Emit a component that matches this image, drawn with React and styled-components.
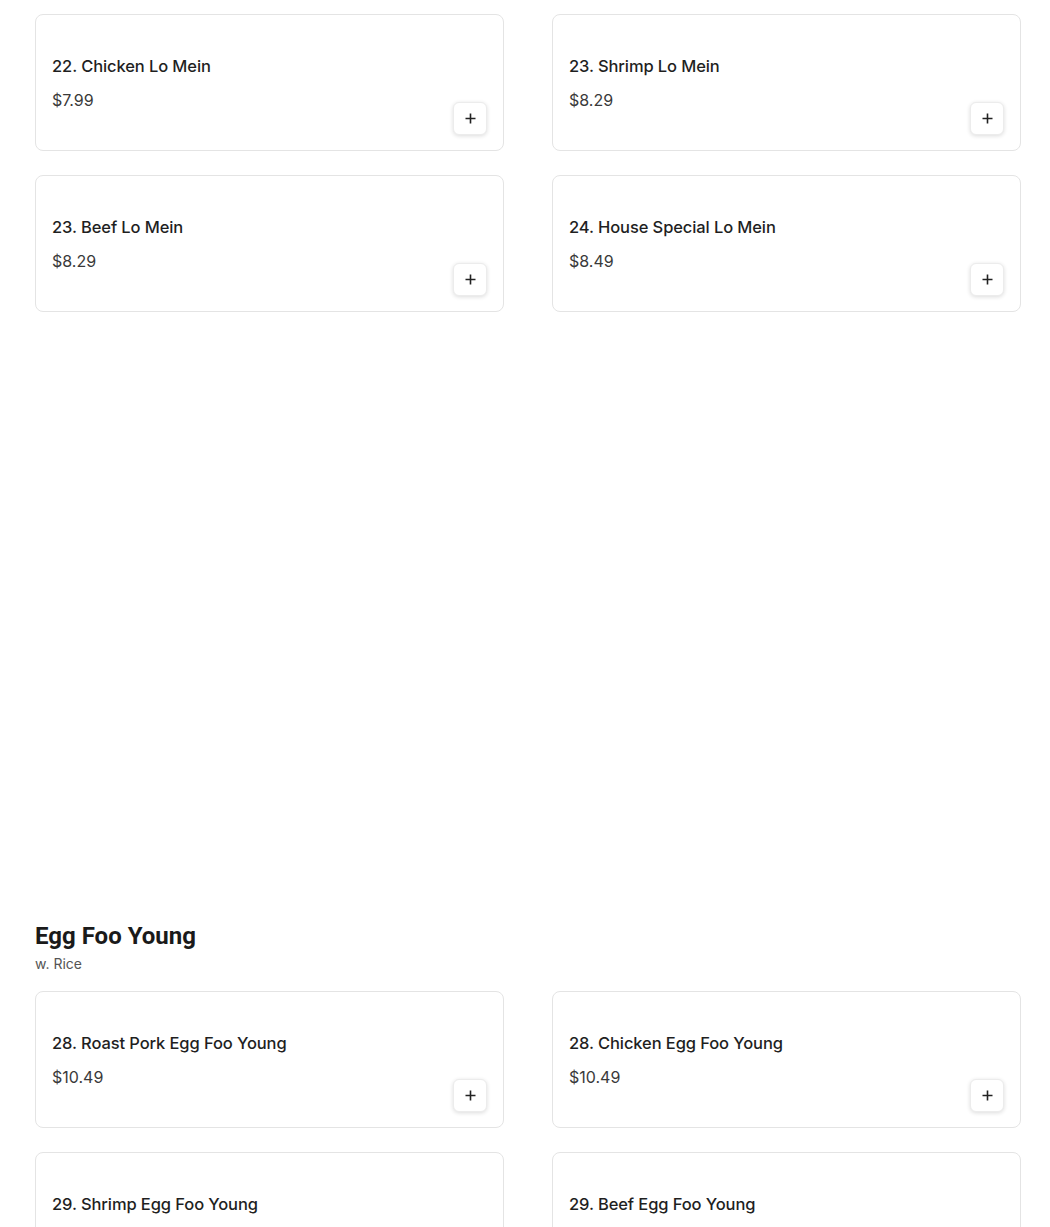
import React from "react";
import styled, { createGlobalStyle } from "styled-components";

const GlobalStyle = createGlobalStyle`
  body {
    margin: 0;
    background: #fff;
    font-family: Inter, "Noto Sans", sans-serif;
    color: #1f1f1f;
  }
`;

const Page = styled.main`
  padding: 14px 29px 40px 35px;
`;

const Section = styled.section`
  margin-top: ${(p) => p.$offset || 0}px;
`;

const SectionTitle = styled.h2`
  margin: 0;
  font-family: Roboto, "Liberation Sans", sans-serif;
  font-size: 24px;
  line-height: 28px;
  font-weight: 700;
  color: #1a1a1a;
`;

const SectionNote = styled.p`
  margin: 4px 0 17px;
  font-size: 14px;
  line-height: 20px;
  color: #555;
`;

const Grid = styled.div`
  display: grid;
  grid-template-columns: 1fr 1fr;
  column-gap: 48px;
  row-gap: 24px;
`;

const Card = styled.div`
  box-sizing: border-box;
  height: 137px;
  display: flex;
  justify-content: space-between;
  padding: 39px 16px 15px;
  border: 1px solid #e4e4e4;
  border-radius: 8px;
  background: #fff;
`;

const Info = styled.div`
  display: flex;
  flex-direction: column;
  gap: 11px;
`;

const Name = styled.div`
  font-size: 16.5px;
  line-height: 24px;
  font-weight: 500;
  color: #1f1f1f;
  letter-spacing: -0.1px;
`;

const Price = styled.div`
  font-size: 16px;
  line-height: 22px;
  color: #3a3a3a;
`;

const AddButton = styled.button`
  align-self: flex-end;
  width: 34px;
  height: 33px;
  display: flex;
  align-items: center;
  justify-content: center;
  padding: 0;
  border: 1px solid #ececec;
  border-radius: 6px;
  background: #fff;
  box-shadow: 0 1px 4px rgba(0, 0, 0, 0.14);
  cursor: pointer;
`;

const PlusIcon = () => (
  <svg width="11" height="11" viewBox="0 0 11 11" fill="none">
    <path d="M5.5 0.5v10M0.5 5.5h10" stroke="#222" strokeWidth="1.6" />
  </svg>
);

const loMein = [
  { name: "22. Chicken Lo Mein", price: "$7.99" },
  { name: "23. Shrimp Lo Mein", price: "$8.29" },
  { name: "23. Beef Lo Mein", price: "$8.29" },
  { name: "24. House Special Lo Mein", price: "$8.49" },
];

const eggFooYoung = [
  { name: "28. Roast Pork Egg Foo Young", price: "$10.49" },
  { name: "28. Chicken Egg Foo Young", price: "$10.49" },
  { name: "29. Shrimp Egg Foo Young", price: "$10.99" },
  { name: "29. Beef Egg Foo Young", price: "$10.99" },
];

function ItemCard({ item }) {
  return (
    <Card>
      <Info>
        <Name>{item.name}</Name>
        <Price>{item.price}</Price>
      </Info>
      <AddButton aria-label={`Add ${item.name}`}>
        <PlusIcon />
      </AddButton>
    </Card>
  );
}

export default function App() {
  return (
    <>
      <GlobalStyle />
      <Page>
        <Section>
          <Grid>
            {loMein.map((item) => (
              <ItemCard key={item.name} item={item} />
            ))}
          </Grid>
        </Section>
        <Section $offset={610}>
          <SectionTitle>Egg Foo Young</SectionTitle>
          <SectionNote>w. Rice</SectionNote>
          <Grid>
            {eggFooYoung.map((item) => (
              <ItemCard key={item.name} item={item} />
            ))}
          </Grid>
        </Section>
      </Page>
    </>
  );
}
